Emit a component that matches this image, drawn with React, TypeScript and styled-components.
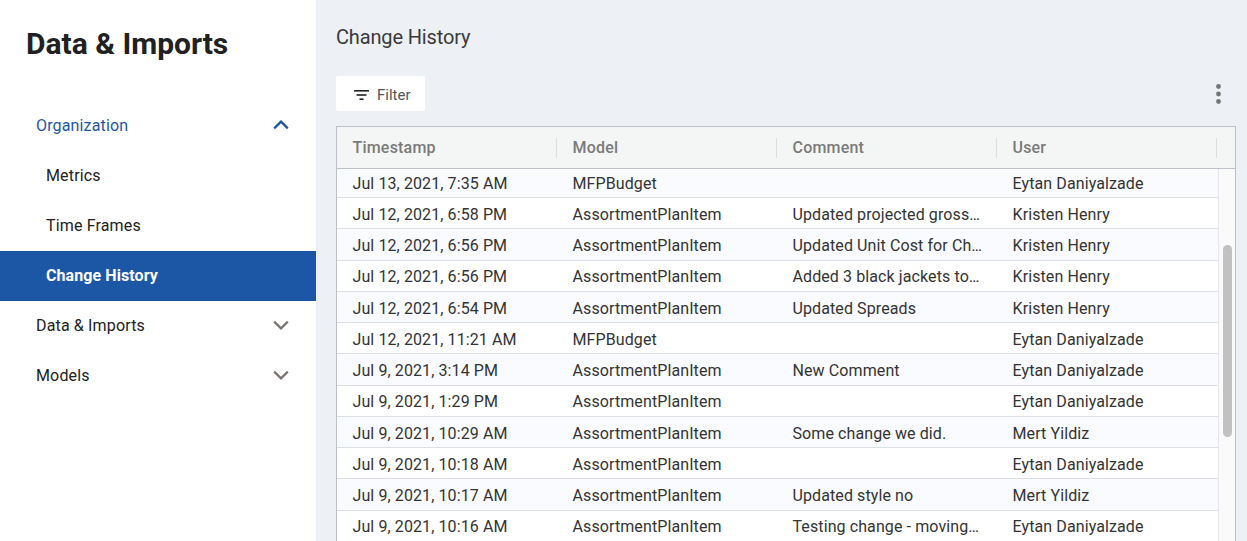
import React from "react";
import styled, { createGlobalStyle } from "styled-components";

const Global = createGlobalStyle`
  html, body { margin: 0; padding: 0; height: 100%; overflow: hidden; }
  body { font-family: Roboto, "Liberation Sans", sans-serif; background: #edf0f5; }
  #root { height: 100%; }
`;

const Page = styled.div`
  display: flex;
  height: 541px;
  overflow: hidden;
`;
const Sidebar = styled.aside`
  width: 316px;
  flex: none;
  background: #fff;
`;
const SideTitle = styled.h1`
  margin: 0;
  padding: 25px 0 0 26px;
  height: 101px;
  box-sizing: border-box;
  font-size: 30px;
  line-height: 38px;
  font-weight: 700;
  color: #212121;
`;
const NavItem = styled.div<{ $active?: boolean; $open?: boolean; $child?: boolean }>`
  height: 50px;
  display: flex;
  align-items: center;
  justify-content: space-between;
  box-sizing: border-box;
  padding: 0 26px 2px ${(p) => (p.$child ? 46 : 36)}px;
  font-size: 16px;
  font-weight: ${(p) => (p.$active ? 700 : 400)};
  letter-spacing: ${(p) => (p.$active ? 0.08 : 0.15)}px;
  color: ${(p) => (p.$active ? "#fff" : p.$open ? "#1c57a5" : "#212121")};
  background: ${(p) => (p.$active ? "#1c57a5" : "transparent")};
`;
const Chevron = styled.svg<{ $open?: boolean }>`
  width: 18px;
  height: 18px;
  fill: none;
  stroke: ${(p) => (p.$open ? "#1c57a5" : "#7b7470")};
  stroke-width: 2.2;
`;
const Main = styled.main`
  flex: 1;
  min-width: 0;
  padding: 0 11px 0 20px;
  display: flex;
  flex-direction: column;
`;
const PageTitle = styled.h2`
  margin: 0;
  height: 76px;
  padding-top: 24px;
  box-sizing: border-box;
  font-size: 20px;
  line-height: 26px;
  font-weight: 400;
  letter-spacing: -0.15px;
  color: #3a3a3a;
`;
const Toolbar = styled.div`
  display: flex;
  align-items: center;
  justify-content: space-between;
  height: 35px;
  margin-bottom: 15px;
`;
const FilterButton = styled.button`
  width: 89px;
  height: 35px;
  border: 0;
  border-radius: 2px;
  background: #fff;
  display: flex;
  align-items: center;
  gap: 8px;
  padding: 2px 0 0 18px;
  font: 400 15px Roboto, sans-serif;
  color: #555;
`;
const FilterIcon = styled.svg`
  width: 15px;
  height: 12px;
  fill: #222;
`;
const MoreIcon = styled.svg`
  width: 7px;
  height: 22px;
  margin-right: 14px;
  fill: #757575;
`;
const Table = styled.div`
  flex: 1;
  min-height: 0;
  border: 1px solid #bcc1c9;
  border-bottom: 0;
  display: flex;
  flex-direction: column;
  background: #fff;
`;
const Header = styled.div`
  height: 42px;
  flex: none;
  box-sizing: border-box;
  display: grid;
  grid-template-columns: repeat(4, 220px);
  align-items: center;
  background: #f4f6f6;
  border-bottom: 1px solid #bcc1c9;
`;
const HeadCell = styled.div`
  height: 20px;
  line-height: 20px;
  padding-left: 15.5px;
  border-right: 1px solid #dcdfe2;
  box-sizing: border-box;
  font-size: 16px;
  font-weight: 500;
  letter-spacing: 0.2px;
  color: #7a7a7a;
`;
const BodyArea = styled.div`
  flex: 1;
  min-height: 0;
  display: flex;
  overflow: hidden;
`;
const Rows = styled.div`
  width: 881px;
  flex: none;
  border-right: 1px solid #e4e6ea;
`;
const Row = styled.div<{ $tinted: boolean; $clipped: boolean }>`
  height: ${(p) => (p.$clipped ? 29.15 : 31.25)}px;
  box-sizing: border-box;
  padding-top: ${(p) => (p.$clipped ? 1 : 2)}px;
  display: grid;
  grid-template-columns: repeat(4, 220px);
  align-items: center;
  background: ${(p) => (p.$tinted ? "#fafbfe" : "#fff")};
  border-bottom: 1px solid #dcdfe5;
`;
const Cell = styled.div`
  padding: 0 14px 0 15.5px;
  font-size: 16px;
  letter-spacing: 0.1px;
  color: #333;
  white-space: nowrap;
  overflow: hidden;
`;
const ScrollTrack = styled.div`
  flex: 1;
  background: #fafafa;
  position: relative;
`;
const ScrollThumb = styled.div`
  position: absolute;
  left: 4px;
  top: 76px;
  width: 9px;
  height: 192px;
  border-radius: 5px;
  background: #c1c1c1;
`;

const rows = [
  ["Jul 13, 2021, 7:35 AM", "MFPBudget", "", "Eytan Daniyalzade"],
  ["Jul 12, 2021, 6:58 PM", "AssortmentPlanItem", "Updated projected gross…", "Kristen Henry"],
  ["Jul 12, 2021, 6:56 PM", "AssortmentPlanItem", "Updated Unit Cost for Ch…", "Kristen Henry"],
  ["Jul 12, 2021, 6:56 PM", "AssortmentPlanItem", "Added 3 black jackets to…", "Kristen Henry"],
  ["Jul 12, 2021, 6:54 PM", "AssortmentPlanItem", "Updated Spreads", "Kristen Henry"],
  ["Jul 12, 2021, 11:21 AM", "MFPBudget", "", "Eytan Daniyalzade"],
  ["Jul 9, 2021, 3:14 PM", "AssortmentPlanItem", "New Comment", "Eytan Daniyalzade"],
  ["Jul 9, 2021, 1:29 PM", "AssortmentPlanItem", "", "Eytan Daniyalzade"],
  ["Jul 9, 2021, 10:29 AM", "AssortmentPlanItem", "Some change we did.", "Mert Yildiz"],
  ["Jul 9, 2021, 10:18 AM", "AssortmentPlanItem", "", "Eytan Daniyalzade"],
  ["Jul 9, 2021, 10:17 AM", "AssortmentPlanItem", "Updated style no", "Mert Yildiz"],
  ["Jul 9, 2021, 10:16 AM", "AssortmentPlanItem", "Testing change - moving…", "Eytan Daniyalzade"],
];

const Down = () => (
  <Chevron viewBox="0 0 18 18"><path d="M2.2 5.6 9 12.4l6.8-6.8" /></Chevron>
);
const Up = () => (
  <Chevron $open viewBox="0 0 18 18"><path d="M2.2 12.4 9 5.6l6.8 6.8" /></Chevron>
);

export default function App() {
  return (
    <Page>
      <Global />
      <Sidebar>
        <SideTitle>Data &amp; Imports</SideTitle>
        <NavItem $open>Organization<Up /></NavItem>
        <NavItem $child>Metrics</NavItem>
        <NavItem $child>Time Frames</NavItem>
        <NavItem $child $active>Change History</NavItem>
        <NavItem>Data &amp; Imports<Down /></NavItem>
        <NavItem>Models<Down /></NavItem>
      </Sidebar>
      <Main>
        <PageTitle>Change History</PageTitle>
        <Toolbar>
          <FilterButton>
            <FilterIcon viewBox="0 0 15 12">
              <rect x="0" y="1" width="15" height="1.6" />
              <rect x="2.5" y="5.2" width="10" height="1.6" />
              <rect x="5.5" y="9.4" width="4" height="1.6" />
            </FilterIcon>
            Filter
          </FilterButton>
          <MoreIcon viewBox="0 0 7 22">
            <circle cx="3.5" cy="3.5" r="2.4" />
            <circle cx="3.5" cy="11" r="2.4" />
            <circle cx="3.5" cy="18.5" r="2.4" />
          </MoreIcon>
        </Toolbar>
        <Table>
          <Header>
            <HeadCell>Timestamp</HeadCell>
            <HeadCell>Model</HeadCell>
            <HeadCell>Comment</HeadCell>
            <HeadCell>User</HeadCell>
          </Header>
          <BodyArea>
            <Rows>
              {rows.map((r, i) => (
                <Row key={i} $tinted={i % 2 === 0} $clipped={i === 0}>
                  {r.map((c, j) => <Cell key={j}>{c}</Cell>)}
                </Row>
              ))}
            </Rows>
            <ScrollTrack><ScrollThumb /></ScrollTrack>
          </BodyArea>
        </Table>
      </Main>
    </Page>
  );
}
